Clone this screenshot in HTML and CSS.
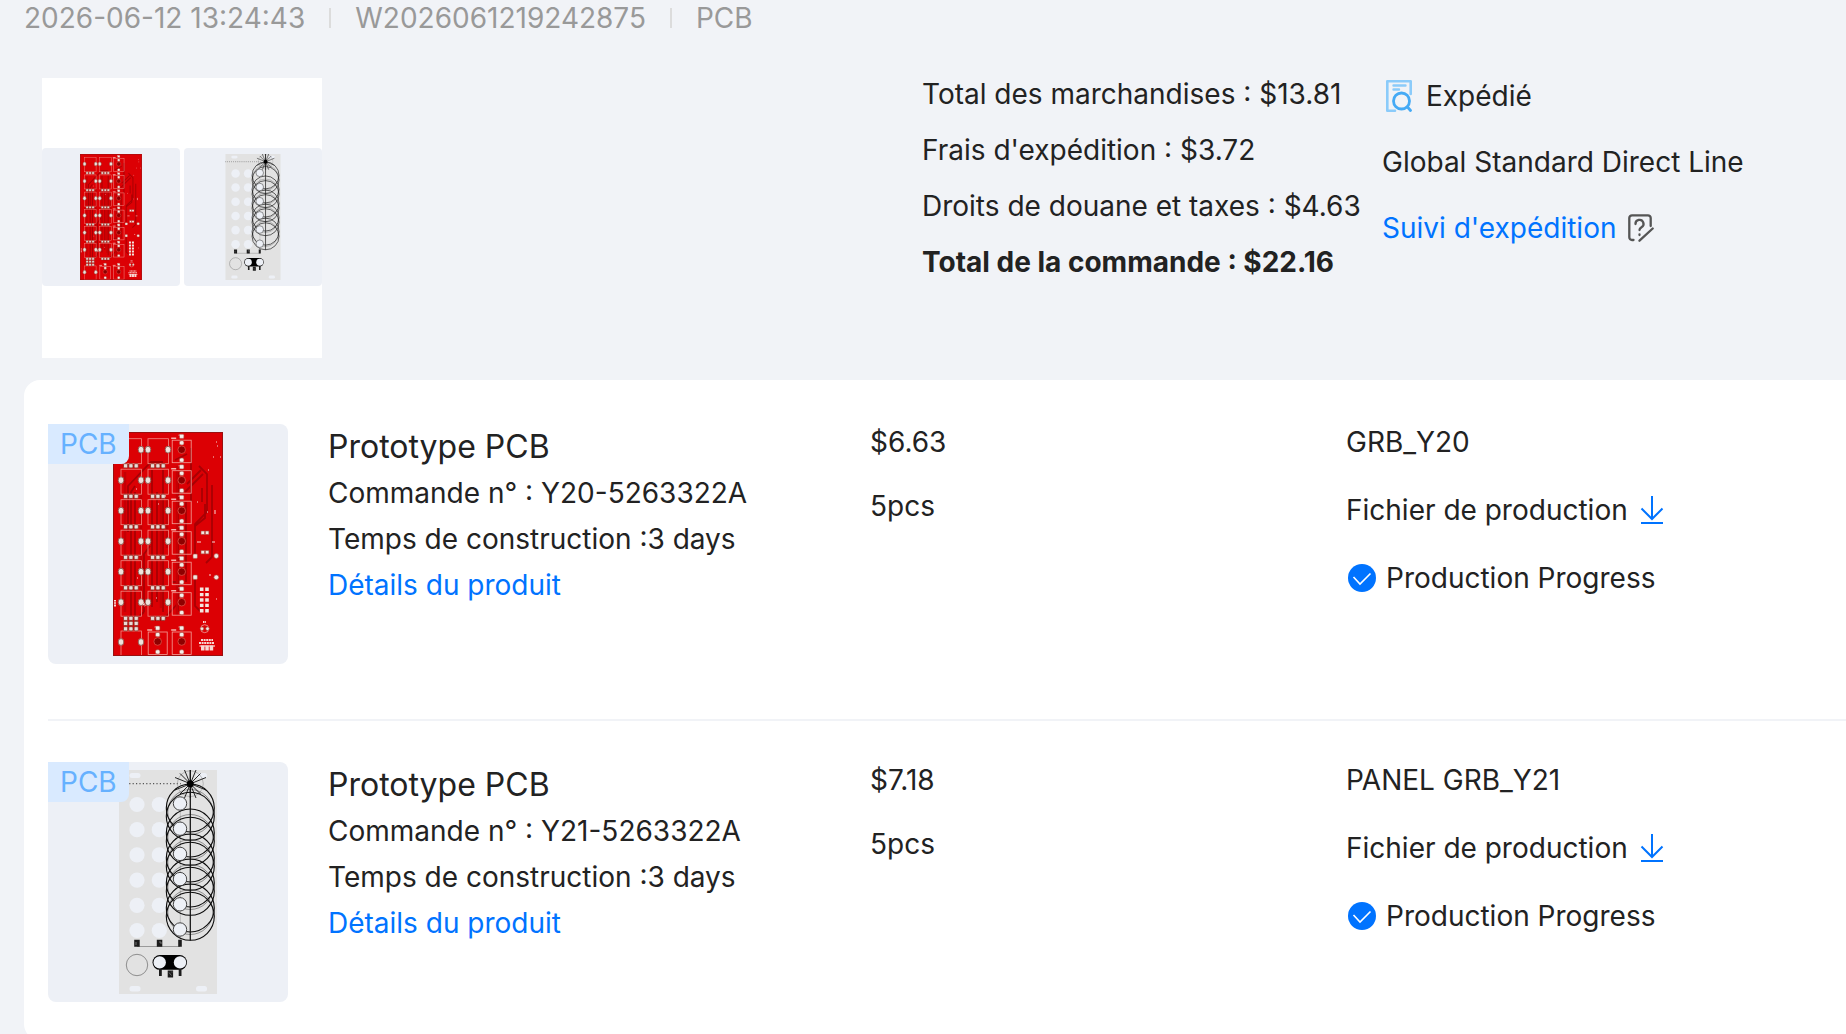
FILE: index.html
```html
<!DOCTYPE html>
<html lang="fr">
<head>
  <meta charset="utf-8">
  <title>Mes commandes</title>
  <link rel="stylesheet" href="styles.css">
</head>
<body>
  <!-- board drawings, reused in the preview and in the rows -->
  <svg class="sprites" aria-hidden="true">
    <defs>
      <g id="pads3" fill="#e9dcd8" stroke="#8c2a20" stroke-width="0.8">
        <rect x="-7.500" y="-2" width="4.200" height="4.200" rx="1"/>
        <rect x="-2.200" y="-2" width="4.200" height="4.200" rx="1"/>
        <rect x="3.100" y="-2" width="4.200" height="4.200" rx="1"/>
      </g>
      <g id="pot">
        <rect x="-10" y="-11" width="20.5" height="25" fill="none" stroke="#f08a84" stroke-width="0.8"/>
        <ellipse cx="-10" rx="2.8" ry="3.4" fill="#eee2dc" stroke="#8c5a50" stroke-width="0.9"/>
        <ellipse cx="10" rx="2.8" ry="3.4" fill="#eee2dc" stroke="#8c5a50" stroke-width="0.9"/>
      </g>
      <g id="jack">
        <rect x="-9.5" y="-9.5" width="19" height="22.5" fill="none" stroke="#f4a09a" stroke-width="0.8"/>
        <circle r="3.8" fill="#8e0000" stroke="#e05048" stroke-width="0.8"/>
        <path d="M-10.500 -11.500h5M-3 -14.500h2" stroke="#f4b0aa" stroke-width="1.500"/>
        <g fill="#f6eeea" stroke="#a84a40" stroke-width="0.6">
          <rect x="-2.200" y="-15.500" width="4.400" height="4.200" rx="1"/>
          <rect x="-2.200" y="-9" width="4.400" height="4.200" rx="1.500"/>
          <rect x="-2.200" y="8.300" width="4.400" height="4.200" rx="1.500"/>
        </g>
      </g>
      <g id="potrow">
        <use href="#pot" x="18"/>
        <use href="#pot" x="45"/>
        <use href="#pads3" x="18" y="16"/>
        <use href="#pads3" x="45" y="16"/>
        <use href="#jack" x="68.700"/>
      </g>
      <g id="ring" fill="none" stroke="#0c0c0c" stroke-width="1.100">
        <circle cx="71.300" cy="38" r="24"/>
        <circle cx="71.300" cy="46.300" r="24"/>
        <circle cx="71.300" cy="42" r="22.500" stroke-width="0.4"/>
      </g>
      <g id="holes" fill="#edf0f6">
        <circle cx="18" cy="34.500" r="7.600"/>
        <circle cx="40.300" cy="34.500" r="7.600"/>
      </g>
      <circle id="drill" cx="61" cy="33.500" r="6.700" fill="#edf0f6" stroke="#333" stroke-width="0.9"/>
    </defs>
    <symbol id="board" viewBox="0 0 110 224">
      <rect width="110" height="224" fill="#dc0004"/>
      <g fill="none" stroke="#a80004" stroke-width="1.800">
        <path d="M15 100V54L38 30h12M18 190V60l4-6M22 190V60M39 175V38M50 180V38M44 170V60M31 180V122l6-8M31 180l-10 9M66 170l-16 18h-8M59 150h6M65 180V40"/>
        <path d="M86 34l8 8v38l-12 12v30M72 60l18-18M74 52l14-14M89 56v14M99 53v72l-6 6M82 94l10-8v-14M82 146v28l6 6M78 70V16M73 150V70M62 28l12-6"/>
      </g>
      <g fill="none" stroke="#c40004" stroke-width="2.500">
        <path d="M12 40v140M54 66v50M48 66v110M64 34v150M28 58v110"/>
      </g>
      <use href="#potrow" y="17.700"/>
      <use href="#potrow" y="48.200"/>
      <use href="#potrow" y="78.700"/>
      <use href="#potrow" y="109.200"/>
      <use href="#potrow" y="139.700"/>
      <use href="#potrow" y="170.200"/>
      <use href="#pot" x="18" y="210"/>
      <use href="#pads3" x="18" y="191.300"/>
      <use href="#pads3" x="18" y="196.700"/>
      <use href="#jack" x="44.700" y="209.500"/>
      <use href="#jack" x="68.700" y="209.500"/>
      <!-- header pads -->
      <path d="M88.700 155.500V181M94 155.500V181" stroke="#f3e6e0" stroke-width="3.600" stroke-dasharray="3.400 2"/>
      <g fill="#f3e6e0" stroke="#a84a40" stroke-width="0.6">
        <rect x="80" y="122" width="4.400" height="4.400" rx="1"/>
        <circle cx="103.300" cy="124" r="2.400"/>
        <rect x="80" y="143" width="4.400" height="4.400" rx="1"/>
        <circle cx="103.300" cy="145.300" r="2.400"/>
        <rect x="88" y="118.500" width="3.600" height="3.400"/>
        <rect x="92.300" y="118.500" width="3.600" height="3.400"/>
        <rect x="88" y="99" width="3.600" height="3.400"/>
        <rect x="92.300" y="99" width="3.600" height="3.400"/>
        <circle cx="91.700" cy="196.700" r="4" fill="none" stroke="#f6d0cc"/>
        <circle cx="89" cy="196.700" r="1.800"/>
        <circle cx="94.500" cy="196.700" r="1.800"/>
      </g>
      <g stroke="#f8d8d4" fill="none">
        <path d="M88 208h12M86 211h15" stroke-width="2" stroke-dasharray="2 0.6"/>
        <path d="M88 216h13" stroke-width="5" stroke-dasharray="3.500 0.800"/>
        <path d="M86.500 214h15.500" stroke-width="1.200"/>
        <path d="M2 168v7M28 168l4 6M90 190h3" stroke-width="2" stroke-dasharray="1.500 0.700"/>
        <path d="M100 25h1M107 25h1M95 38h1M102 78v4M23 57h1M52 64h1M45 72h1M103 167h1M96 143h2M84 110h4M99 110h3M43 166h1M104 14h1M103 10h1M24 146h1M84 70h1M94 80h1" stroke-width="1"/>
      </g>
      <rect x="0.5" y="0.5" width="109" height="223" fill="none" stroke="#9a1010" stroke-width="1"/>
    </symbol>
    <symbol id="panel" viewBox="0 0 98 224">
      <rect width="98" height="224" fill="#e2e2e2"/>
      <g fill="#edf0f6">
        <rect x="10.500" y="3" width="11" height="5" rx="2.500"/>
        <rect x="77" y="3" width="11" height="5" rx="2.500"/>
        <rect x="10.500" y="216" width="11" height="5.500" rx="2.500"/>
        <rect x="77" y="216" width="11" height="5.500" rx="2.500"/>
      </g>
      <path d="M0 13.700h62" stroke="#555" stroke-width="1.200" stroke-dasharray="1.200 2.200"/>
      <circle cx="71.300" cy="13.700" r="13" fill="none" stroke="#999" stroke-width="0.6"/>
      <path d="M61.300 40v132" stroke="#999" stroke-width="0.5"/>
      <use href="#holes"/>
      <use href="#holes" y="25.200"/>
      <use href="#holes" y="50.400"/>
      <use href="#holes" y="75.600"/>
      <use href="#holes" y="100.800"/>
      <use href="#holes" y="126"/>
      <use href="#ring"/>
      <use href="#ring" y="25"/>
      <use href="#ring" y="50"/>
      <use href="#ring" y="75"/>
      <use href="#ring" y="100"/>
      <path d="M71.300 0v170.500" stroke="#0c0c0c" stroke-width="1.200"/>
      <!-- star -->
      <path d="M71.300 -1v29M56 7.500l31 12.500M56 20l31-12.500M65.500 0l11.500 28M77 0l-11.500 28M61 3.500l20.500 20.500M81.500 3.500l-20.500 20.500" stroke="#111" stroke-width="0.9"/>
      <circle cx="71.300" cy="13.700" r="3.500" fill="#000"/>
      <use href="#drill"/>
      <use href="#drill" y="25.200"/>
      <use href="#drill" y="50.400"/>
      <use href="#drill" y="75.600"/>
      <use href="#drill" y="100.800"/>
      <use href="#drill" y="126"/>
      <path d="M18 176.500h43" stroke="#888" stroke-width="0.8"/>
      <path d="M15.200 169.800h5.500v7h-5.500zM37.800 169.800h5.500v7h-5.500zM59.200 169.800h3.600v7h-3.600z" fill="#1c1c1c"/>
      <path d="M17 172v3M40 172h2v2" stroke="#888" stroke-width="0.8" fill="none"/>
      <circle cx="18" cy="195" r="10.700" fill="none" stroke="#777" stroke-width="0.8"/>
      <rect x="33.500" y="185" width="34.500" height="14.800" rx="7.400" fill="#000"/>
      <circle cx="40.700" cy="192.400" r="6.200" fill="#edf0f6"/>
      <circle cx="61" cy="192.400" r="6.200" fill="#edf0f6"/>
      <path d="M40 199h2.800v7h-2.800zM59.700 199h2.800v7h-2.800zM48.700 200.500h5.400v7h-5.400z" fill="#1c1c1c"/>
      <path d="M50 202.500l2.500 3M52.500 202h1" stroke="#888" stroke-width="0.7"/>
    </symbol>
    <symbol id="download" viewBox="0 0 24 30">
      <path d="M12 1v23M1.500 13.500L12 24l10.500-10.500M1 28h22" fill="none" stroke="#0073ff" stroke-width="2"/>
    </symbol>
    <symbol id="check" viewBox="0 0 28 28">
      <circle cx="14" cy="14" r="14" fill="#0073ff"/>
      <path d="M5.500 13l6.500 7L22.500 9.500" fill="none" stroke="#fff" stroke-width="1.600"/>
    </symbol>
  </svg>

  <div class="order-meta">
    <span>2026-06-12 13:24:43</span>
    <span class="sep"></span>
    <span>W2026061219242875</span>
    <span class="sep"></span>
    <span>PCB</span>
  </div>

  <div class="order-summary">
    <div class="preview">
      <div class="preview-tile"><svg class="art-board"><use href="#board"/></svg></div>
      <div class="preview-tile"><svg class="art-panel"><use href="#panel"/></svg></div>
    </div>
    <div class="totals">
      <div>Total des marchandises : $13.81</div>
      <div>Frais d'expédition : $3.72</div>
      <div>Droits de douane et taxes : $4.63</div>
      <div class="grand-total">Total de la commande : $22.16</div>
    </div>
    <div class="shipping">
      <div class="status">
        <svg class="icon-status" viewBox="0 0 26 32" fill="none" stroke-linecap="round" stroke-linejoin="round">
          <path d="M9 30.700H1.300V1.300h23.400V14" stroke="#8bcbfa" stroke-width="2.600"/>
          <path d="M7.500 5.500h12M7.500 9.500h5.500" stroke="#8bcbfa" stroke-width="2.400"/>
          <circle cx="15.500" cy="21" r="8" stroke="#45aaf5" stroke-width="2.800"/>
          <path d="M21.500 27l3 3.500" stroke="#45aaf5" stroke-width="2.800"/>
        </svg>
        <span>Expédié</span>
      </div>
      <div>Global Standard Direct Line</div>
      <div class="tracking">
        <a href="#">Suivi d'expédition</a>
        <svg class="icon-note" viewBox="0 0 26 28" fill="none" stroke="#555" stroke-width="2.300" stroke-linecap="round" stroke-linejoin="round">
          <path d="M5.500 26H4a2.700 2.700 0 0 1-2.700-2.700V4A2.700 2.700 0 0 1 4 1.300h16A2.700 2.700 0 0 1 22.700 4v8"/>
          <path d="M7.500 10a4 4 0 1 1 6 3.300c-1.400 0.900-2 1.400-2 2.700M11.500 20.500v0.500"/>
          <path d="M24.700 14.500L11.500 26.700"/>
        </svg>
      </div>
    </div>
  </div>

  <div class="items">
    <div class="item">
      <div class="product">
        <div class="thumb">
          <span class="tag">PCB</span>
          <svg class="art-board"><use href="#board"/></svg>
        </div>
        <div class="product-text">
          <div class="product-name">Prototype PCB</div>
          <div>Commande n° : Y20-5263322A</div>
          <div>Temps de construction :3 days</div>
          <a href="#">Détails du produit</a>
        </div>
      </div>
      <div class="price">
        <div>$6.63</div>
        <div>5pcs</div>
      </div>
      <div class="files">
        <div>GRB_Y20</div>
        <div class="file-line">Fichier de production <a href="#" aria-label="Télécharger"><svg class="icon-download"><use href="#download"/></svg></a></div>
        <div class="progress"><svg class="icon-check"><use href="#check"/></svg>Production Progress</div>
      </div>
    </div>

    <div class="item">
      <div class="product">
        <div class="thumb">
          <span class="tag">PCB</span>
          <svg class="art-panel"><use href="#panel"/></svg>
        </div>
        <div class="product-text">
          <div class="product-name">Prototype PCB</div>
          <div>Commande n° : Y21-5263322A</div>
          <div>Temps de construction :3 days</div>
          <a href="#">Détails du produit</a>
        </div>
      </div>
      <div class="price">
        <div>$7.18</div>
        <div>5pcs</div>
      </div>
      <div class="files">
        <div>PANEL GRB_Y21</div>
        <div class="file-line">Fichier de production <a href="#" aria-label="Télécharger"><svg class="icon-download"><use href="#download"/></svg></a></div>
        <div class="progress"><svg class="icon-check"><use href="#check"/></svg>Production Progress</div>
      </div>
    </div>
  </div>
</body>
</html>
```
FILE: styles.css
```css
body {
  margin: 0;
  background-color: #f1f3f7;
  font-family: Inter, "Open Sans", sans-serif;
  font-size: 28px;
  line-height: 36px;
  color: #222222;
}

a {
  color: #0073ff;
  text-decoration: none;
}

svg {
  display: block;
  flex-shrink: 0;
}

.sprites {
  position: absolute;
  width: 0;
  height: 0;
}

.order-meta {
  display: flex;
  align-items: center;
  gap: 24px;
  padding-left: 24px;
  color: #999999;
}

.order-meta .sep {
  width: 2px;
  height: 20px;
  background-color: #dcdcdc;
}

.order-summary {
  display: grid;
  grid-template-columns: 880fr 460fr 464fr;
  padding: 30px 0 22px 42px;
}

.preview {
  display: flex;
  align-items: center;
  gap: 4px;
  box-sizing: border-box;
  width: 280px;
  height: 280px;
  margin-top: 12px;
  padding-bottom: 2px;
  background-color: #ffffff;
}

.preview-tile {
  display: flex;
  flex: 1;
  align-items: center;
  justify-content: center;
  height: 138px;
  border-radius: 4px;
  background-color: #edf0f6;
}

.preview-tile svg {
  height: 126px;
}

.totals {
  line-height: 56px;
  white-space: nowrap;
}

.grand-total {
  font-weight: bold;
}

.shipping {
  display: flex;
  flex-direction: column;
  gap: 30px;
  padding-top: 12px;
}

.status,
.tracking {
  display: flex;
  align-items: center;
}

.status {
  gap: 14px;
  padding-left: 4px;
}

.tracking {
  gap: 12px;
}

.icon-status {
  width: 26px;
  height: 32px;
}

.icon-note {
  width: 26px;
  height: 28px;
}

.items {
  margin-left: 24px;
  padding: 3px 0 0 24px;
  border-radius: 16px 0 0 16px;
  background-color: #ffffff;
}

.item {
  display: grid;
  grid-template-columns: 822fr 476fr 500fr;
  padding: 41px 0 55px;
}

.item + .item {
  border-top: 2px solid #f1f3f7;
}

.item:last-child {
  padding-bottom: 38px;
}

.product {
  display: flex;
  gap: 40px;
}

.thumb {
  position: relative;
  display: flex;
  align-items: center;
  justify-content: center;
  width: 240px;
  height: 240px;
  border-radius: 0 8px 8px 8px;
  background-color: #edf0f6;
}

.thumb svg {
  height: 224px;
}

.art-board,
.art-panel {
  width: 110px;
}

.tag {
  position: absolute;
  top: 0;
  left: 0;
  padding: 2px 12px;
  border-radius: 0 0 8px 0;
  background-color: #d9eaff;
  color: #66b1ff;
}

.product-text {
  line-height: 46px;
}

.product-name {
  font-size: 32px;
  font-optical-sizing: none;
}

.price,
.files {
  display: flex;
  flex-direction: column;
}

.price {
  gap: 28px;
}

.files {
  gap: 32px;
}

.file-line {
  display: flex;
  align-items: center;
  gap: 12px;
}

.icon-download {
  width: 24px;
  height: 30px;
}

.progress {
  display: flex;
  align-items: center;
  gap: 10px;
  padding-left: 2px;
}

.icon-check {
  width: 28px;
  height: 28px;
}
```
